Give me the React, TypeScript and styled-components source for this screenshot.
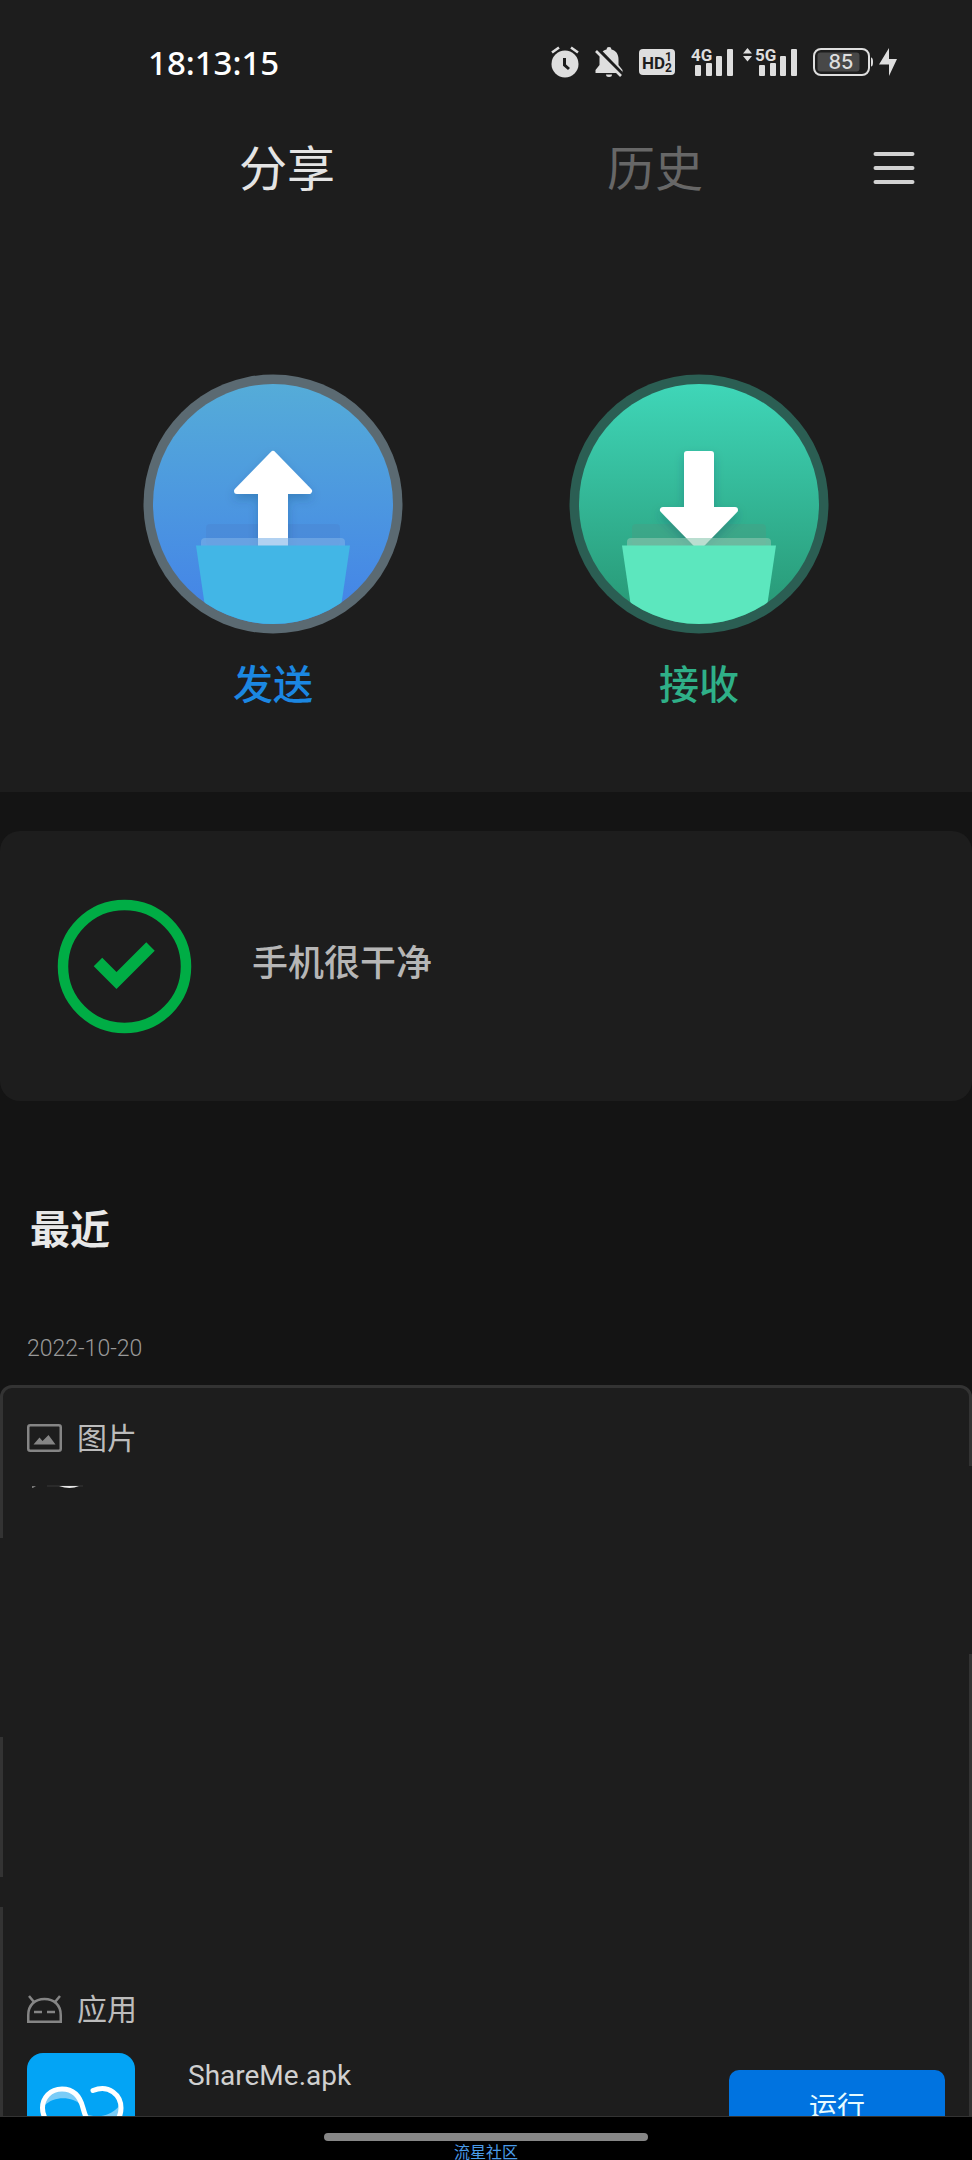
import React from "react";
import styled, { createGlobalStyle } from "styled-components";

const cjk = `"Noto Sans", "Noto Sans CJK SC", sans-serif`;
const latin = `Roboto, "Noto Sans CJK SC", sans-serif`;

const GlobalStyle = createGlobalStyle`
  * { box-sizing: border-box; }
  body { margin: 0; background: #141414; font-family: ${cjk}; color: #e4e4e4; }
  button { border: 0; padding: 0; background: none; font: inherit; color: inherit; cursor: pointer; }
  h1, h2, h3, p { margin: 0; }
  svg { display: block; flex: none; }
`;

const Screen = styled.div`
  display: flex;
  flex-direction: column;
  height: 100vh;
`;

const Scroller = styled.main`
  flex: 1;
  min-height: 0;
  overflow-y: auto;
  scrollbar-width: none;
`;

const SharePane = styled.section`
  background: #1d1d1d;
  padding-bottom: 83px;
`;

const StatusBar = styled.div`
  display: flex;
  align-items: center;
  justify-content: space-between;
  height: 124px;
  padding: 0 75px 0 148px;
`;

const Clock = styled.time`
  font-family: "Noto Sans", sans-serif;
  font-size: 33px;
  font-weight: 500;
  color: #fff;
`;

const StatusIcons = styled.div<{ $gap: number }>`
  display: flex;
  align-items: center;
  gap: ${(p) => p.$gap}px;
`;

const Header = styled.header`
  display: flex;
  align-items: center;
  gap: 34px;
  height: 88px;
  padding: 0 57px 0 103px;
`;

const Tabs = styled.nav`
  display: grid;
  grid-template-columns: 1fr 1fr;
  flex: 1;
`;

const Tab = styled.button<{ $active?: boolean }>`
  font-size: 48px;
  line-height: 64px;
  color: ${(p) => (p.$active ? "#e4e4e4" : "#676767")};
`;

const Actions = styled.div`
  display: grid;
  grid-template-columns: 1fr 1fr;
  padding: 162px 60px 0;
`;

const Action = styled.button<{ $color: string }>`
  display: flex;
  flex-direction: column;
  align-items: center;
  gap: 25px;
  font-size: 40px;
  font-weight: 500;
  line-height: 50px;
  color: ${(p) => p.$color};
`;

const CleanCard = styled.section`
  display: flex;
  align-items: center;
  gap: 60px;
  height: 270px;
  margin-top: 39px;
  padding: 0 57px;
  border-radius: 20px;
  background: #1d1d1d;
  font-size: 36px;
  font-weight: 500;
  line-height: 48px;
  color: #b6b6b6;
`;

const CleanText = styled.p`
  padding-bottom: 6px;
`;

const RecentTitle = styled.h2`
  margin-top: 98px;
  padding: 0 30px;
  font-size: 40px;
  font-weight: 700;
  line-height: 60px;
  color: #e8e8e8;
`;

const DateLabel = styled.p`
  margin-top: 70px;
  padding: 0 27px;
  font-family: ${latin};
  font-size: 23px;
  font-weight: 300;
  line-height: 40px;
  color: #999;
`;

const Panel = styled.section`
  position: relative;
  margin-top: 16px;
  padding: 28px 24px 40px;
  border: 3px solid #333;
  border-radius: 12px;
  background: #1d1d1d;
`;

/* Dark smear that hides part of the panel's side border. */
const Smear = styled.span<{ $side: "left" | "right"; $top: number; $size: number }>`
  position: absolute;
  ${(p) => p.$side}: -3px;
  top: ${(p) => p.$top}px;
  width: 4px;
  height: ${(p) => p.$size}px;
  background: #1d1d1d;
`;

const GroupTitle = styled.h3`
  display: flex;
  align-items: center;
  gap: 15px;
  font-size: 30px;
  font-weight: 400;
  line-height: 44px;
  color: #bcbcbc;
`;

const Photo = styled.div`
  height: 454px;
  margin: 25px 0 48px;
`;

const FileRow = styled.div`
  display: flex;
  align-items: center;
  margin-top: 22px;
`;

const FileName = styled.p`
  flex: 1;
  align-self: flex-start;
  padding-left: 53px;
  font-family: ${latin};
  font-size: 28px;
  line-height: 46px;
  color: #d0d0d0;
`;

const RunButton = styled.button`
  width: 216px;
  height: 74px;
  padding-bottom: 4px;
  border-radius: 10px;
  background: #0073e0;
  font-size: 28px;
  color: #e6fbff;
`;

const NavBar = styled.footer`
  display: flex;
  flex-direction: column;
  align-items: center;
  height: 44px;
  padding-top: 16px;
  border-top: 1px solid #333;
  background: #000;
  font-size: 16px;
  line-height: 18px;
  color: #4a9be8;
`;

const Handle = styled.span`
  width: calc(100% / 3);
  height: 8px;
  margin-bottom: 2px;
  border-radius: 4px;
  flex: none;
  background: #868686;
`;

const INK = "#dedede";

const AlarmIcon = () => (
  <svg width="28" height="32" viewBox="0 0 28 32" aria-hidden="true">
    <circle cx="14" cy="18" r="13.5" fill={INK} />
    <path d="M1 6.5 8 1.5M27 6.5 20 1.5" stroke={INK} strokeWidth="2.6" />
    <path d="M13.5 12v7l4.5 4" fill="none" stroke="#1d1d1d" strokeWidth="3" />
  </svg>
);

const MutedBellIcon = () => (
  <svg width="28" height="32" viewBox="0 0 28 32" aria-hidden="true">
    <path
      d="M14 1a2.5 2.5 0 0 1 2.5 2.4C21 4.5 23.5 8 23.5 13v6l4 5v3H.5v-3l4-5v-6c0-5 2.500-8.500 7-9.600A2.500 2.500 0 0 1 14 1Z"
      fill={INK}
    />
    <path d="M11 28.500h6a3 2.500 0 0 1-6 0Z" fill={INK} />
    <path d="M3 3.500 29 30" stroke="#1d1d1d" strokeWidth="4" />
    <path d="M1 5 26 30" stroke={INK} strokeWidth="2.600" />
  </svg>
);

const HdIcon = () => (
  <svg width="36" height="26" viewBox="0 0 36 26" fontFamily="Roboto, sans-serif" fontWeight="700" fill="#1d1d1d">
    <rect width="36" height="26" rx="4" fill={INK} />
    <text x="3" y="19.500" fontSize="17">HD</text>
    <text x="26" y="12" fontSize="12">1</text>
    <text x="26" y="22.500" fontSize="12">2</text>
  </svg>
);

const SignalIcon = ({ label, arrows }: { label: string; arrows?: boolean }) => {
  const shift = arrows ? 12 : 0;
  return (
    <svg
      width={42 + shift}
      height="32"
      viewBox={`${-shift} 0 ${42 + shift} 32`}
      fontFamily="Roboto, sans-serif"
      fontWeight="700"
      fill={INK}
    >
      {arrows && <path d="M-12 7.500-7.500 2-3 7.500ZM-12 10-7.500 15.500-3 10Z" />}
      <text x="0" y="15" fontSize="17">{label}</text>
      <rect x="4" y="19" width="6" height="11" rx="1" />
      <rect x="15" y="17" width="6" height="13" rx="1" />
      <rect x="25" y="10" width="6" height="20" rx="1" />
      <rect x="36" y="3" width="6" height="27" rx="1" />
    </svg>
  );
};

const BatteryIcon = () => (
  <svg width="60" height="28" viewBox="0 0 60 28">
    <rect x="1" y="1" width="55" height="26" rx="7" fill="none" stroke={INK} strokeWidth="2" />
    <rect x="4.500" y="4.500" width="42" height="19" rx="3" fill="#484848" />
    <path d="M58 9.500q2 0 2 4.500t-2 4.500Z" fill={INK} />
    <text x="28" y="21" textAnchor="middle" fontFamily="Inter, sans-serif" fontSize="20" fontWeight="500" fill={INK}>85</text>
  </svg>
);

const BoltIcon = () => (
  <svg width="18" height="28" viewBox="0 0 18 28" aria-hidden="true">
    <path d="M10 0v11h8L10 28V16.500H0Z" fill={INK} />
  </svg>
);

const MenuIcon = () => (
  <svg width="42" height="34" viewBox="0 0 42 34" aria-hidden="true">
    <path d="M2.500 3h37M2.500 17h37M2.500 31h37" stroke="#d2d2d2" strokeWidth="4" strokeLinecap="round" />
  </svg>
);

type DiscProps = { id: string; top: string; bottom: string; ring: string; flap: string; back: string; folder: string; arrow: string };

const Disc = ({ id, top, bottom, ring, flap, back, folder, arrow }: DiscProps) => (
  <svg width="260" height="260" viewBox="0 0 260 260" aria-hidden="true">
    <defs>
      <linearGradient id={`${id}-fill`} x1="0" y1="0" x2="0" y2="1">
        <stop offset="0" stopColor={top} />
        <stop offset="1" stopColor={bottom} />
      </linearGradient>
      <clipPath id={`${id}-clip`}>
        <circle cx="130" cy="130" r="120" />
      </clipPath>
      <filter id={`${id}-shadow`} x="-30%" y="-30%" width="160%" height="160%">
        <feDropShadow dx="0" dy="5" stdDeviation="5" floodColor="#0a3c64" floodOpacity="0.25" />
      </filter>
    </defs>
    <circle cx="130" cy="130" r="129.500" fill={ring} />
    <circle cx="130" cy="130" r="120" fill={`url(#${id}-fill)`} />
    <g clipPath={`url(#${id}-clip)`}>
      <rect x="63" y="150" width="134" height="22" rx="4" fill={back} opacity="0.35" />
      <path d={arrow} fill="#fff" stroke="#fff" strokeWidth="6" strokeLinejoin="round" filter={`url(#${id}-shadow)`} />
      <path d="M58 172v-4q0-4 4-4h136q4 0 4 4v4Z" fill={flap} fillOpacity="0.6" />
      <path d="M53 171.500h154L194 260H66Z" fill={folder} />
    </g>
  </svg>
);

const CheckIcon = () => (
  <svg width="135" height="135" viewBox="0 0 135 135" aria-hidden="true">
    <circle cx="67.500" cy="67.500" r="61.500" fill="none" stroke="#00ad45" strokeWidth="10.500" />
    <path d="M41 63 59.500 81.500 93.500 47.500" fill="none" stroke="#00ad45" strokeWidth="12" />
  </svg>
);

const PictureIcon = () => (
  <svg width="35" height="28" viewBox="0 0 35 28" aria-hidden="true">
    <rect x="1.250" y="1.250" width="32.500" height="25.500" rx="2" fill="none" stroke="#858585" strokeWidth="2.500" />
    <path d="M6.500 20.500 12.500 13.500 15.500 17 21.500 11 28.500 20.500Z" fill="#858585" />
  </svg>
);

const AndroidIcon = () => (
  <svg width="35" height="28" viewBox="0 0 35 28" fill="none" stroke="#858585" strokeWidth="2.500" aria-hidden="true">
    <path d="M1.250 26.750V20C1.250 10 8 4 17.500 4S33.750 10 33.750 20V26.750Z" />
    <path d="M2 1 7 7M33 1 28 7M7 17h8M20 17h8" />
  </svg>
);

const ShareMeLogo = () => (
  <svg width="108" height="108" viewBox="0 0 108 108" aria-hidden="true">
    <rect width="108" height="108" rx="16" fill="#03a4f5" />
    <path d="M17 53C20 32 50 30 54 52 46 44 28 42 17 53ZM57 60C68 66 84 64 93 52 94 76 64 84 57 60Z" fill="#7accf7" />
    <path
      d="M66 37.500C82 31 94 42 94 55 94 68 84 75 75 75 62 75 59 66 56 55 53 43 46 36 35 36 23 36 15.500 45 15.500 55S23 75 35 75C42 75 47 72 50 67"
      fill="none"
      stroke="#fff"
      strokeWidth="5"
      strokeLinecap="round"
    />
  </svg>
);

const PhotoEdge = () => (
  <svg width="80" height="6" viewBox="0 0 80 6" aria-hidden="true">
    <path d="M5 1h4l-3 2H5Z" fill="#777" />
    <path d="M20 1h36" stroke="#383838" />
    <path d="M32 1h20q-9 4-20 0Z" fill="#e8e8e8" />
  </svg>
);

export default function App() {
  return (
    <>
      <GlobalStyle />
      <Screen>
        <Scroller>
          <SharePane>
            <StatusBar>
              <Clock>18:13:15</Clock>
              <StatusIcons $gap={16}>
                <AlarmIcon />
                <MutedBellIcon />
                <HdIcon />
                <StatusIcons $gap={10}>
                  <SignalIcon label="4G" />
                  <SignalIcon label="5G" arrows />
                </StatusIcons>
                <StatusIcons $gap={6}>
                  <BatteryIcon />
                  <BoltIcon />
                </StatusIcons>
              </StatusIcons>
            </StatusBar>
            <Header>
              <Tabs>
                <Tab $active>分享</Tab>
                <Tab>历史</Tab>
              </Tabs>
              <button aria-label="菜单">
                <MenuIcon />
              </button>
            </Header>
            <Actions>
              <Action $color="#1b87e2">
                <Disc
                  id="send"
                  top="#55acd8"
                  bottom="#4382e8"
                  ring="#5b6a72"
                  flap="#7db2e8"
                  back="#4a80cc"
                  folder="#42b6e6"
                  arrow="M130 80 166 117H142V180H118V117H94Z"
                />
                发送
              </Action>
              <Action $color="#2fb088">
                <Disc
                  id="receive"
                  top="#3fd6b8"
                  bottom="#279572"
                  ring="#2b5e53"
                  flap="#8cc8b0"
                  back="#4f9c80"
                  folder="#5ce7be"
                  arrow="M118 80H142V136H166L130 173 94 136H118Z"
                />
                接收
              </Action>
            </Actions>
          </SharePane>
          <CleanCard>
            <CheckIcon />
            <CleanText>手机很干净</CleanText>
          </CleanCard>
          <RecentTitle>最近</RecentTitle>
          <DateLabel>2022-10-20</DateLabel>
          <Panel>
            <Smear $side="left" $top={150} $size={199} />
            <Smear $side="left" $top={489} $size={30} />
            <Smear $side="right" $top={78} $size={188} />
            <GroupTitle>
              <PictureIcon />
              图片
            </GroupTitle>
            <Photo>
              <PhotoEdge />
            </Photo>
            <GroupTitle>
              <AndroidIcon />
              应用
            </GroupTitle>
            <FileRow>
              <ShareMeLogo />
              <FileName>ShareMe.apk</FileName>
              <RunButton>运行</RunButton>
            </FileRow>
          </Panel>
        </Scroller>
        <NavBar>
          <Handle />
          流星社区
        </NavBar>
      </Screen>
    </>
  );
}
